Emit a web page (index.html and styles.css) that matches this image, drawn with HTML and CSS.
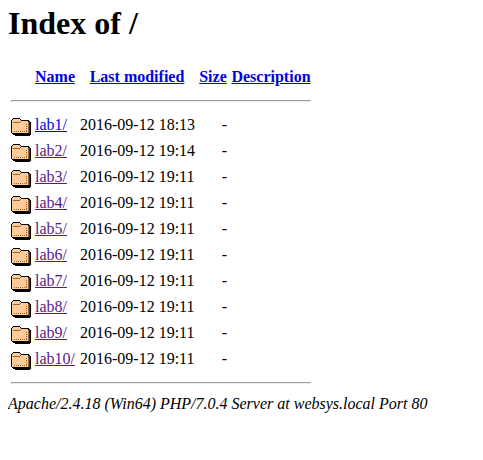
FILE: index.html
```
<!DOCTYPE html>
<html lang="en">
<head>
<meta charset="utf-8">
<title>Index of /</title>
<link rel="stylesheet" href="styles.css">
</head>
<body>
<h1>Index of /</h1>
<table id="listing">
<colgroup><col class="c-icon"><col class="c-name"><col class="c-date"><col class="c-size"><col class="c-desc"></colgroup>
<tbody><tr class="head"><th></th><th><a class="new" href="#">Name</a></th><th><a class="new" href="#">Last modified</a></th><th><a class="new" href="#">Size</a></th><th><a class="new" href="#">Description</a></th></tr>
<tr><th colspan="5"><hr></th></tr></tbody>
<tbody id="rows"></tbody>
<tbody><tr><th colspan="5"><hr class="last"></th></tr></tbody>
</table>
<address>Apache/2.4.18 (Win64) PHP/7.0.4 Server at websys.local Port 80</address>
<script src="script.js"></script>
</body>
</html>
```
FILE: styles.css
```
body {
  margin: 8px;
  background: #fff;
  color: #000;
  font: 16px "Liberation Serif", serif;
}
h1 { margin: -3px 0 22px; font-size: 32px; line-height: 37px; }
a { color: #551a8b; }
a.new { color: #0000ee; }
table { table-layout: fixed; width: 306px; border-spacing: 2px; }
th, td { padding: 1px; white-space: nowrap; }
.c-icon { width: 22px; }
.c-name { width: 42px; }
.c-date { width: 118px; }
.c-size { width: 30px; }
.c-desc { width: 82px; }
.head th { height: 20px; }
hr { margin: 9px 0 8px; }
hr.last { margin: 8px 0; }
.icon { display: block; width: 20px; height: 22px; }
td.date { padding-left: 2px; text-align: left; }
td.size { text-align: right; }
td.icon-cell { vertical-align: top; }
address { line-height: 18px; }
```
FILE: script.js
```
const times = ["18:13", "19:14", "19:11", "19:11", "19:11", "19:11", "19:11", "19:11", "19:11", "19:11"];
const folder = `<svg class="icon" viewBox="0 -2 20 22" shape-rendering="crispEdges">
<path fill="#000" d="M2 2h7v1h1v1h8v1h1v1h1v13h-1v1H4v-1H2v-1H1v-1H0V4h1V3h1z"/>
<path fill="#333" d="M18 6h1v12h-1z"/>
<path fill="#fc9" d="M2 3h7v1h1v1h7v12H1V4h1z"/>
<path fill="#963" d="M2 6h7v1H2zM9 5h1v1H9zM17 6h1v11h-1z"/>
<path fill="none" stroke="#963" stroke-dasharray="1 1" d="M3 15.5h13M15.5 8v7"/>
</svg>`;
document.getElementById("rows").innerHTML = times.map((time, i) => `
<tr><td class="icon-cell">${folder}</td><td><a class="${i === 0 ? "new" : ""}" href="#">lab${i + 1}/</a></td><td class="date">2016-09-12 ${time}</td><td class="size">&nbsp; - </td><td>&nbsp;</td></tr>`).join("");
```
